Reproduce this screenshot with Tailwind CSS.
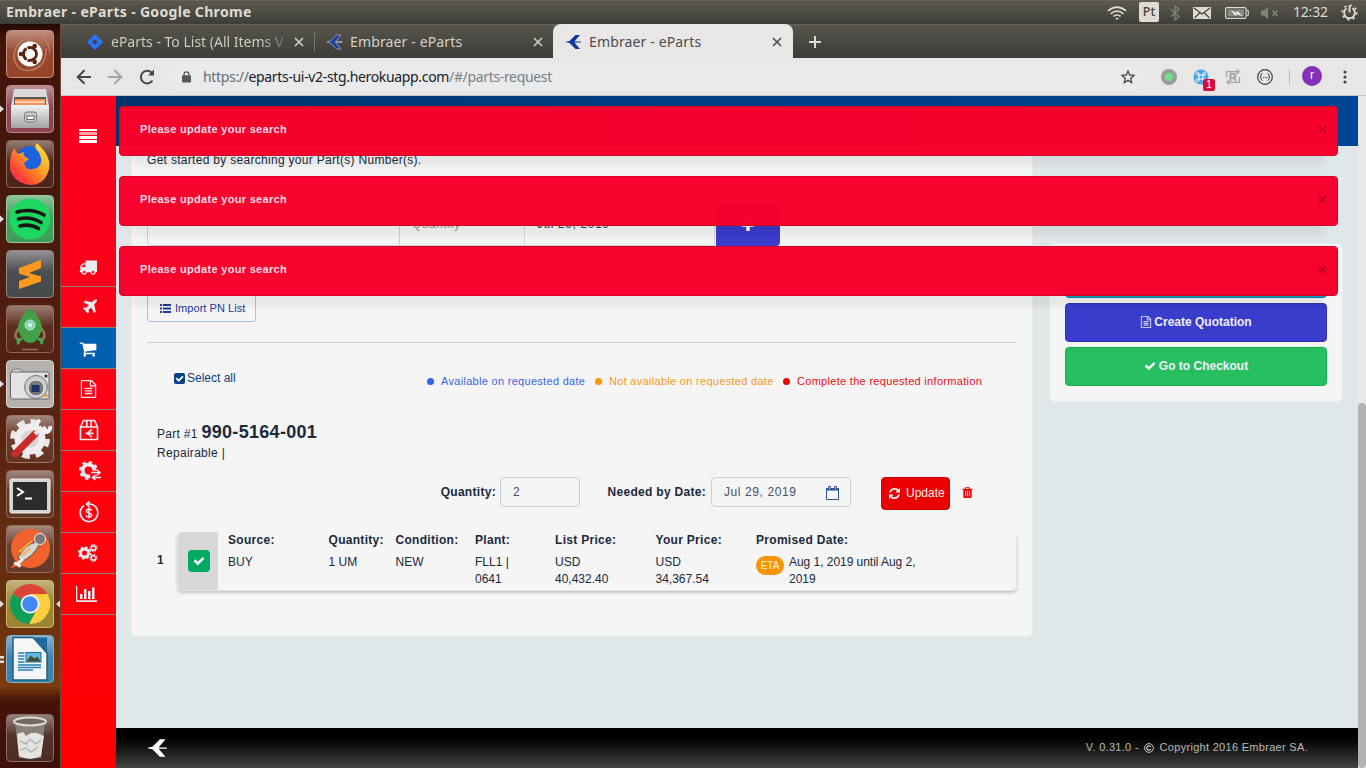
<!DOCTYPE html>
<html lang="en">
<head>
<meta charset="utf-8">
<title>Embraer - eParts</title>
<script src="https://cdn.jsdelivr.net/npm/@tailwindcss/browser@4"></script>
</head>
<body class="w-[1366px] h-[768px] overflow-hidden font-['Liberation_Sans',sans-serif] text-[12px] text-[#20293a]">
<svg width="0" height="0" class="absolute">
  <symbol id="check" viewBox="0 0 1792 1792"><path d="M1671 566q0 40-28 68l-724 724-136 136q-28 28-68 28t-68-28l-136-136-362-362q-28-28-28-68t28-68l136-136q28-28 68-28t68 28l294 295 656-657q28-28 68-28t68 28l136 136q28 28 28 68z"/></symbol>
  <symbol id="file" viewBox="0 0 1792 1792"><path d="M1596 380q28 28 48 76t20 88v1152q0 40-28 68t-68 28h-1344q-40 0-68-28t-28-68v-1600q0-40 28-68t68-28h896q40 0 88 20t76 48zm-444-244v376h376q-10-29-22-41l-313-313q-12-12-41-22zm384 1528v-1024h-416q-40 0-68-28t-28-68v-416h-768v1536h1280zm-1024-864q0-14 9-23t23-9h704q14 0 23 9t9 23v64q0 14-9 23t-23 9h-704q-14 0-23-9t-9-23v-64zm736 224q14 0 23 9t9 23v64q0 14-9 23t-23 9h-704q-14 0-23-9t-9-23v-64q0-14 9-23t23-9h704zm0 256q14 0 23 9t9 23v64q0 14-9 23t-23 9h-704q-14 0-23-9t-9-23v-64q0-14 9-23t23-9h704z"/></symbol>
  <symbol id="emb" viewBox="0 0 16 16"><path d="M0 7.700 3.500 7 9.500 1h4.500L8.500 7.500H15v1H8.500L14 15H9.500L3.500 9 0 8.300z"/></symbol>
  <symbol id="x" viewBox="0 0 10 10"><path d="M1 1l8 8M9 1L1 9" fill="none" stroke="currentColor" stroke-width="1.6"/></symbol>
  <linearGradient id="metal" x1="0" y1="0" x2="0" y2="1"><stop offset="0" stop-color="#f2f2f2"/><stop offset="1" stop-color="#a4a4a4"/></linearGradient>
  <linearGradient id="fox" x1="1" y1="0" x2="0" y2="1"><stop offset="0" stop-color="#fff44a"/><stop offset=".45" stop-color="#ff9a22"/><stop offset=".75" stop-color="#ff4236"/><stop offset="1" stop-color="#e4206a"/></linearGradient>
  <linearGradient id="glass" x1="0" y1="0" x2="0" y2="1"><stop offset="0" stop-color="#fff" stop-opacity=".4"/><stop offset=".45" stop-color="#fff" stop-opacity=".03"/><stop offset="1" stop-color="#fff" stop-opacity="0"/></linearGradient>
  <symbol id="gloss" viewBox="0 0 48 48"><rect x="1" y="1" width="46" height="46" rx="4" fill="url(#glass)"/></symbol>
</svg>

<div class="flex flex-col w-full h-full">
  <!-- system bar -->
  <header class="h-6 shrink-0 flex items-center bg-gradient-to-b from-[#5b594f] to-[#3e3d38] border-t border-[#66644f] text-[#dfdbd2] font-['Noto_Sans',sans-serif]">
    <div class="pl-[6px] -mt-[2px] w-[1107px] text-[14px] leading-[20px] font-bold tracking-[0.33px] whitespace-nowrap">Embraer - eParts - Google Chrome</div>
    <svg class="w-5 h-[14px]" viewBox="0 0 20 14" fill="none" stroke="#dfdbd2" stroke-width="1.6"><path d="M.8 5q9.200-7.800 18.400 0M3.600 7.800q6.400-5.400 12.800 0M6.400 10.400q3.600-2.800 7.200 0"/><path d="M8 12h4l-2 2z" fill="#dfdbd2" stroke="none"/></svg>
    <div class="ml-3 -mt-px w-5 h-5 rounded-[2px] bg-[#dfdbd2] text-[#3f3e3a] text-[12.5px] font-medium leading-[20px] text-center">Pt</div>
    <svg class="ml-[11px] w-[10px] h-4" viewBox="0 0 10 16" fill="none" stroke="#85837a" stroke-width="1.3"><path d="M1 4.500l8 7L5 15V1l4 3.500-8 7"/></svg>
    <svg class="ml-[13px] w-[18px] h-3" viewBox="0 0 18 12"><path d="M0 0h18v12H0z" fill="#dfdbd2"/><path d="M1 1l8 6 8-6M1.500 11L7 5.500M16.500 11L11 5.500" fill="none" stroke="#45443f" stroke-width="1.200"/></svg>
    <svg class="ml-[14px] w-6 h-3" viewBox="0 0 24 12" fill="none" stroke="#dfdbd2"><rect x=".6" y=".6" width="20.500" height="10.800" rx="1.500" stroke-width="1.200"/><rect x="2.500" y="2.500" width="16.500" height="7" fill="#8c8a82" stroke="none"/><path d="M22 3.500h1.300v5H22"/><path d="M5.500 3l6 3.200.5-2.200L17.500 9.300l-6-2.600-.5 2.300z" fill="#fff" stroke="none"/></svg>
    <svg class="ml-3 w-[18px] h-3" viewBox="0 0 18 12" fill="#85837a"><path d="M0 3.500h3L7 0v12L3 8.500H0z"/><path d="M11.500 3.500l5 5.500M16.500 3.500l-5 5.500" stroke="#85837a" stroke-width="1.500"/></svg>
    <div class="ml-[14px] -mt-px w-[48px] text-[14px] leading-[20px] tracking-[-0.2px]">12:32</div>
    <svg class="w-[17px] h-[17px]" viewBox="0 0 17 17" fill="none" stroke="#dfdbd2"><circle cx="8.500" cy="8.500" r="7.200" stroke-width="1.800" stroke-dasharray="2.200 3.450"/><path d="M5.600 4.200a5.400 5.400 0 1 0 5.800 0M8.500 1.500v7" stroke-width="1.900"/></svg>
  </header>

  <div class="flex flex-1 min-h-0">
    <!-- launcher -->
    <aside class="relative w-[61px] shrink-0 border-r border-[#6d4a3a] bg-[linear-gradient(to_bottom,#220a06_0,#411409_14px,#47190d_180px,#5a2413_420px,#6b310f_590px,#7a3b0d_662px,#461408_676px,#3c1008_100%)] pt-[6px] pl-[6px] flex flex-col gap-[7px]">
      <svg class="shrink-0 w-12 h-12" viewBox="0 0 48 48"><rect x=".5" y=".5" width="47" height="47" rx="4" fill="#95442a" stroke="#c58e76"/><use href="#gloss"/><path d="M8 30Q7 12 24 7q18-4 20 16M40 18q1 18-14 22Q10 43 8 26" fill="none" stroke="#b87c62" stroke-width="1.500"/><circle cx="24" cy="24" r="12.500" fill="#fff"/><circle cx="24" cy="24" r="6.500" fill="none" stroke="#5a2312" stroke-width="2.800" stroke-dasharray="12.600 1"/><circle cx="15" cy="24" r="2.300" fill="#5a2312"/><circle cx="28.700" cy="16" r="2.300" fill="#5a2312"/><circle cx="28.700" cy="32" r="2.300" fill="#5a2312"/></svg>
      <svg class="shrink-0 w-12 h-12" viewBox="0 0 48 48"><rect x=".5" y=".5" width="47" height="47" rx="4" fill="#8d4350" stroke="#c08a92"/><use href="#gloss"/><path d="M8 4h32l3 18H5z" fill="#d9d9d9"/><path d="M8 12h32v11H8z" fill="#5c5652"/><path d="M9 14h30v10H9z" fill="#f0945a"/><path d="M9 17h30" stroke="#fff" stroke-width="1"/><rect x="5" y="20" width="38" height="23" rx="1" fill="url(#metal)"/><rect x="18.500" y="27" width="12" height="10" rx="2.500" fill="#ccc" stroke="#777"/><rect x="21" y="31" width="7" height="3.500" fill="#fff" stroke="#666"/></svg>
      <svg class="shrink-0 w-12 h-12" viewBox="0 0 48 48"><rect x=".5" y=".5" width="47" height="47" rx="4" fill="#4c2418" stroke="#8a6a5e"/><use href="#gloss"/><circle cx="24" cy="20" r="14" fill="#1c62dc"/><path d="M8 8l4 6 6-2q-2 4 5 7l-5 4q2 8 9 6 7-1 8-7 1-7-5-13-2-3 1-6 4 4 8 9 6 9 4 17-4 16-19 16Q8 43 4 29q-1-12 4-21z" fill="url(#fox)"/></svg>
      <svg class="shrink-0 w-12 h-12" viewBox="0 0 48 48"><rect x=".5" y=".5" width="47" height="47" rx="4" fill="#3f9d5a" stroke="#9bc8a5"/><use href="#gloss"/><circle cx="24" cy="24" r="20.500" fill="#1ed760"/><path d="M11 17q15-4 27 3M12.500 24q12-3 22.500 3.500M14 31q10-2.500 18.500 2.500" fill="none" stroke="#191414" stroke-width="3.600" stroke-linecap="round"/></svg>
      <svg class="shrink-0 w-12 h-12" viewBox="0 0 48 48"><rect x=".5" y=".5" width="47" height="47" rx="4" fill="#46494a" stroke="#958b86"/><use href="#gloss"/><path d="M13 18l22-8v8l-12 5 12 3.500v5L13 39v-8l11-4-11-3.500z" fill="#ff9a1f"/></svg>
      <svg class="shrink-0 w-12 h-12" viewBox="0 0 48 48"><rect x=".5" y=".5" width="47" height="47" rx="4" fill="#572617" stroke="#8f6a5c"/><use href="#gloss"/><path d="M13 23q-7 9 0 12M35 23q7 9 0 12" fill="none" stroke="#8c7e58" stroke-width="2.500"/><path d="M24 3q12 10 12 21-4 14-12 14t-12-14Q12 13 24 3z" fill="#43a047"/><path d="M16 34q-6 1-3 5M32 34q6 1 3 5" fill="none" stroke="#3fae57" stroke-width="3"/><circle cx="24" cy="20" r="5" fill="#7dd6b6" stroke="#c7e8d4"/><circle cx="24" cy="20" r="2" fill="#eafff8"/><path d="M16 44.500h16" stroke="#8a7165" stroke-width="1.500"/></svg>
      <svg class="shrink-0 w-12 h-12" viewBox="0 0 48 48"><rect x=".5" y=".5" width="47" height="47" rx="4" fill="#b5b1ae" stroke="#d8d5d3"/><ellipse cx="11" cy="12" rx="5.500" ry="3" fill="#ddd" stroke="#777"/><rect x="4.500" y="12" width="38.500" height="27" rx="2" fill="#e3e3e3" stroke="#666"/><circle cx="30" cy="27" r="11.500" fill="#ccc" stroke="#777"/><circle cx="30" cy="28" r="8" fill="#777" stroke="#eee"/><rect x="25.500" y="25" width="8" height="7" fill="#173568"/><circle cx="40" cy="16" r="1.500" fill="#222"/><rect x="38.500" y="34" width="3" height="3" fill="#e69b2e"/></svg>
      <svg class="shrink-0 w-12 h-12" viewBox="0 0 48 48"><rect x=".5" y=".5" width="47" height="47" rx="4" fill="#643423" stroke="#9d7766"/><use href="#gloss"/><circle cx="24" cy="24" r="17.500" fill="none" stroke="#e8e8e8" stroke-width="5" stroke-dasharray="7.750 6"/><circle cx="24" cy="24" r="12" fill="#d5d5d5" stroke="#eee" stroke-width="7"/><path d="M9 39L29 19" stroke="#c92a2a" stroke-width="7" stroke-linecap="round"/><path d="M29 19l7-7" stroke="#e6e6e6" stroke-width="4.500"/><path d="M34 5q-5 4-2 8t9 4q4-2 3-6" fill="none" stroke="#f0f0f0" stroke-width="4"/></svg>
      <svg class="shrink-0 w-12 h-12" viewBox="0 0 48 48"><rect x=".5" y=".5" width="47" height="47" rx="4" fill="#5f3524" stroke="#93705f"/><use href="#gloss"/><rect x="4" y="9" width="40" height="34" rx="1.500" fill="#d4d4d2" stroke="#f0f0f0"/><rect x="7" y="12" width="34" height="28" fill="#2b2d2c"/><path d="M11 18l6 4-6 4" fill="none" stroke="#fff" stroke-width="2"/><path d="M19 28.500h7" stroke="#fff" stroke-width="2"/></svg>
      <svg class="shrink-0 w-12 h-12" viewBox="0 0 48 48"><rect x=".5" y=".5" width="47" height="47" rx="4" fill="#663a28" stroke="#96705e"/><use href="#gloss"/><circle cx="24.500" cy="23.500" r="19.500" fill="#f1622d"/><path d="M4 43l10-9 3 6z" fill="#f1622d"/><path d="M12 32q8-13 18-15l3 3q-5 11-18 17z" fill="#d6d6cf" stroke="#4d4d4d"/><path d="M13 27L26 16M15 31l9-7" stroke="#ffac42" stroke-width="2"/><circle cx="34" cy="14" r="5.500" fill="#777" stroke="#eee"/><path d="M17 34l-6 5-3-1M12 38l2 4" fill="none" stroke="#eee" stroke-width="3"/></svg>
      <svg class="shrink-0 w-12 h-12" viewBox="0 0 48 48"><rect x=".5" y=".5" width="47" height="47" rx="4" fill="#9c8430" stroke="#cbb96e"/><use href="#gloss"/><path d="M24 24L6.700 14a20 20 0 0 1 34.600 0z" fill="#db4437"/><path d="M24 24V14h17.500a20 20 0 0 1-18 30z" fill="#ffcd40"/><path d="M24 24l6 7-7 13A20 20 0 0 1 6.700 14z" fill="#109d58"/><circle cx="24" cy="24" r="9.500" fill="#f3f3f3"/><circle cx="24" cy="24" r="7.700" fill="#4587f4"/></svg>
      <svg class="shrink-0 w-12 h-12" viewBox="0 0 48 48"><rect x=".5" y=".5" width="47" height="47" rx="4" fill="#3a82ad" stroke="#7db0cc"/><use href="#gloss"/><path d="M7 2.500h20L41 18v27H7z" fill="#f6f6f6" stroke="#1e5f85" stroke-width="1.500"/><path d="M27 2.500h14V18z" fill="#1c6b9c"/><rect x="20" y="17.500" width="15" height="9.500" fill="#66b8e0" stroke="#136fa8"/><path d="M20.500 26.500l4-6 4 3 3-2 3 5z" fill="#46502f"/><path d="M12 18h6.500M12 21h6.500M12 24h6.500M12 27h6.500M12 30h23M12 32.500h23M12 35h15" stroke="#2481b8" stroke-width="1.400"/></svg>
      <svg class="shrink-0 w-12 h-12 mt-6" viewBox="0 0 48 48"><rect x=".5" y=".5" width="47" height="47" rx="4" fill="#4d2c24" stroke="#867069"/><use href="#gloss"/><path d="M9 8h30l-4 36H13z" fill="#8b7f7a"/><ellipse cx="24" cy="7.500" rx="16" ry="4" fill="#776761" stroke="#ddd" stroke-width="2"/><path d="M11 20l6-2 3 4 5-3 6 0 7 3-3 20q-11 6-22 0z" fill="#e4e4e0"/><path d="M14 27l6 3 4-5 6 5 5-4M14 36l6-2 5 4 7-5" fill="none" stroke="#b5b5b0" stroke-width="1.500"/></svg>
      <svg class="absolute left-0 top-0 w-[61px] h-[744px]" viewBox="0 0 61 744" fill="#ddd"><path d="M0 81.500l4 3.500-4 3.500zM0 191.500l4 3.500-4 3.500zM0 356.500l4 3.500-4 3.500zM0 576.500l4 3.500-4 3.500zM60 576.500l-4 3.500 4 3.500zM0 632h4v2.500H0zM0 636.500h4v2.500H0z"/></svg>
    </aside>

    <div class="flex-1 min-w-0 flex flex-col">
      <!-- tab strip -->
      <div class="h-[34px] shrink-0 flex items-center bg-gradient-to-b from-[#57554d] to-[#3d3c37] border-t border-[#66645b] font-['Noto_Sans',sans-serif] text-[14px] leading-5 text-[#d3d0c6] tracking-[0.14px] whitespace-nowrap">
        <div class="w-[254px] flex items-center pl-[26px]">
          <svg class="w-4 h-4" viewBox="0 0 16 16"><path d="M8 0l8 8-8 8-8-8z" fill="#2477fa"/><path d="M8 5.200L10.800 8 8 10.800 5.200 8z" fill="#45443f"/></svg>
          <div class="ml-2 w-[178px] tracking-[0px] bg-gradient-to-r from-[#d3d0c6] from-85% to-[#d3d0c6]/10 bg-clip-text text-transparent">eParts - To List (All Items V</div>
          <svg class="ml-[5px] w-[10px] h-[10px]"><use href="#x"/></svg>
        </div>
        <div class="w-[238px] h-full flex items-center">
          <div class="w-px h-5 -ml-px mr-px bg-[#77756c]"></div>
          <svg class="ml-[11px] w-4 h-4" fill="#1b3fa0" stroke="#b7bccb" stroke-width=".7"><use href="#emb"/></svg>
          <div class="ml-[7px] w-[183px]">Embraer - eParts</div>
          <svg class="w-[10px] h-[10px]"><use href="#x"/></svg>
        </div>
        <div class="w-[240px] self-stretch -mt-px pt-px rounded-t-lg bg-[#e9e7e5] text-[#4b4c4e] flex items-center">
          <svg class="ml-[13px] w-4 h-4" fill="#1238a0"><use href="#emb"/></svg>
          <div class="ml-[7px] w-[183px]">Embraer - eParts</div>
          <svg class="w-[10px] h-[10px]"><use href="#x"/></svg>
        </div>
        <svg class="ml-4 w-3 h-3" viewBox="0 0 12 12"><path d="M6 0v12M0 6h12" stroke="#dedbd2" stroke-width="2"/></svg>
      </div>
      <!-- toolbar -->
      <div class="h-[38px] shrink-0 flex items-center bg-[#e9e7e5] border-b border-[#c6c4c1]">
        <svg class="ml-[15px] w-[15px] h-4" viewBox="0 0 15 16" fill="none" stroke="#45464a" stroke-width="2"><path d="M15 8H2M8.500 1.200L1.700 8l6.800 6.800"/></svg>
        <svg class="ml-[17px] w-[15px] h-4" viewBox="0 0 15 16" fill="none" stroke="#a5a5a5" stroke-width="2"><path d="M0 8h13M6.500 1.200L13.300 8l-6.800 6.800"/></svg>
        <svg class="ml-[16px] w-4 h-4" viewBox="0 0 16 16" fill="none" stroke="#45464a" stroke-width="2"><path d="M13.500 11.500A6.300 6.300 0 1 1 12.500 3.500L14 5.200"/><path d="M15 .5v6H9z" fill="#45464a" stroke="none"/></svg>
        <div class="ml-[13px] h-7 w-[976px] rounded-full bg-[#e8eaec] flex items-center">
          <svg class="ml-[14px] w-[9px] h-[12px]" viewBox="0 0 10 13"><rect y="4.500" width="10" height="8" rx="1" fill="#55575b"/><path d="M2.300 5V3.500a2.700 2.700 0 0 1 5.400 0V5" fill="none" stroke="#55575b" stroke-width="1.400"/></svg>
          <div class="ml-3 w-[918px] font-['Noto_Sans',sans-serif] text-[14px] leading-5 tracking-[-0.34px] text-[#7c8085]"><span class="text-[#6a6d72]">https://</span><span class="text-[#202124]">eparts-ui-v2-stg.herokuapp.com</span>/#/parts-request</div>
          <svg class="w-[14px] h-[14px]" viewBox="0 0 14 14" fill="none" stroke="#4d5054" stroke-width="1.400"><path d="M7 1l1.700 4 4.300.4-3.200 2.900.9 4.300L7 10.300l-3.700 2.300.9-4.300L1 5.400 5.300 5z"/></svg>
        </div>
        <svg class="ml-[17px] w-4 h-4" viewBox="0 0 16 16"><circle cx="8" cy="8" r="6" fill="#6fe08c" stroke="#9c9c9c" stroke-width="4"/></svg>
        <div class="relative ml-4 w-4 h-4">
          <svg class="w-4 h-4" viewBox="0 0 16 16"><circle cx="8" cy="8" r="7.500" fill="#4ba3e8"/><path d="M6 6h4v4H6zM6 6H4.700A1.300 1.300 0 1 1 6 4.700zM10 6V4.700A1.300 1.300 0 1 1 11.300 6zM6 10v1.300A1.300 1.300 0 1 1 4.700 10zM10 10h1.300A1.300 1.300 0 1 1 10 11.300z" fill="none" stroke="#fff"/></svg>
          <div class="absolute left-[10px] top-[10px] w-3 h-3 rounded-[2px] bg-[#dc0a3c] text-white text-[10px] leading-3 text-center">1</div>
        </div>
        <svg class="ml-4 w-4 h-4" viewBox="0 0 16 16" fill="none" stroke="#a6a6a6" stroke-width="1.300"><path d="M1.500 8V2.700H14M11.500.5L14 2.700l-2.500 2.200M14.500 8v5.300H2M4.500 11L2 13.300l2.500 2.200"/><path d="M5.500 12V4.800h3a1.900 1.900 0 0 1 0 3.800h-3m3 0L11 12" stroke-width="1.900"/></svg>
        <svg class="ml-4 w-4 h-4" viewBox="0 0 16 16" fill="none" stroke="#3c3c3c"><circle cx="8" cy="8" r="7.300" stroke-width="1.200"/><path d="M5.500 4.500q-1.500 0-1.500 2T3 8q1 0 1 1.500t1.500 2M10.500 4.500q1.500 0 1.500 2T13 8q-1 0-1 1.500t-1.500 2"/><path d="M6 8.500h4.500" stroke-dasharray="1 .7"/></svg>
        <div class="ml-4 w-px h-4 bg-[#bfbfbf]"></div>
        <div class="ml-[12px] w-5 h-5 -mt-[2px] rounded-full bg-[#8430b8] text-white text-[12px] leading-[18px] text-center">r</div>
        <svg class="ml-[21px] w-1 h-4" viewBox="0 0 4 16" fill="#454649"><circle cx="2" cy="3" r="1.600"/><circle cx="2" cy="8" r="1.600"/><circle cx="2" cy="13" r="1.600"/></svg>
      </div>

      <div class="flex flex-1 min-h-0">
        <!-- site navigation -->
        <nav class="w-[55px] shrink-0 bg-gradient-to-b from-[#f90020] via-[#fd0010] to-[#ff0000] text-[#e9e9ee] flex flex-col">
          <div class="h-[149px] pt-[33px] pl-[18px]"><svg class="w-[18px] h-[14px]" viewBox="0 0 18 14" fill="#fff"><path d="M0 0h18v2H0zM0 7h18v3H0zM0 11h18v3H0z"/><path d="M0 3h18v3H0z" fill="#ffa0ab"/></svg></div>
          <div class="h-[42px] border-b border-[#8a8080] flex items-center justify-center pr-[2px]"><svg class="w-[18px] h-[18px] mt-[2px]" viewBox="0 0 1792 1792" fill="currentColor"><path d="M640 1408q0-52-38-90t-90-38-90 38-38 90 38 90 90 38 90-38 38-90zm-384-512h384v-256h-158q-13 0-22 9l-195 195q-9 9-9 22v30zm1280 512q0-52-38-90t-90-38-90 38-38 90 38 90 90 38 90-38 38-90zm256-1088v1024q0 15-4 26.500t-13.500 18.500-16.500 11.500-23.500 6-22.500 2-25.500 0-22.500-.5q0 106-75 181t-181 75-181-75-75-181h-384q0 106-75 181t-181 75-181-75-75-181h-64q-3 0-22.500.5t-25.500 0-22.500-2-23.500-6-16.500-11.500-13.500-18.500-4-26.500q0-26 19-45t45-19v-320q0-8-.5-35t0-38 2.500-34.500 6.500-37 14-30.500 22.500-30l198-198q19-19 50.500-32t58.500-13h160v-192q0-26 19-45t45-19h1024q26 0 45 19t19 45z"/></svg></div>
          <div class="h-[41px] border-b border-[#8a8080] flex items-center justify-center"><svg class="w-[18px] h-[18px] ml-[2px]" viewBox="0 0 1792 1792" fill="currentColor"><path d="M1568 160q44 52 12 148t-108 172l-161 161 160 696q5 19-12 33l-128 96q-7 6-19 6-4 0-7-1-15-3-21-16l-279-508-259 259 53 194q5 17-8 31l-96 96q-9 9-23 9h-2q-15-2-24-13l-189-252-252-189q-11-7-13-23-1-13 9-25l96-97q9-9 23-9 6 0 8 1l194 53 259-259-508-279q-14-8-17-24-2-16 9-27l128-128q14-13 30-8l665 159 160-160q76-76 172-108t148 12z"/></svg></div>
          <div class="h-[41px] border-b border-[#8a8080] bg-[#0060ae] flex items-center justify-center pr-[2px]"><svg class="w-[18px] h-[18px] mt-[2px]" viewBox="0 0 1792 1792" fill="#fff"><path d="M704 1536q0 52-38 90t-90 38-90-38-38-90 38-90 90-38 90 38 38 90zm896 0q0 52-38 90t-90 38-90-38-38-90 38-90 90-38 90 38 38 90zm128-1088v512q0 24-16.500 42.500t-40.500 21.500l-1044 122q13 60 13 70 0 16-24 64h920q26 0 45 19t19 45-19 45-45 19h-1024q-26 0-45-19t-19-45q0-11 8-31.500t16-36 21.500-40 15.500-29.500l-177-823h-204q-26 0-45-19t-19-45 19-45 45-19h256q16 0 28.500 6.500t19.500 15.500 13 24.500 8 26 5.500 29.500 4.500 26h1201q26 0 45 19t19 45z"/></svg></div>
          <div class="h-[41px] border-b border-[#8a8080] flex items-center justify-center"><svg class="w-[19px] h-[18px]" fill="currentColor"><use href="#file"/></svg></div>
          <div class="h-[41px] border-b border-[#8a8080] flex items-center justify-center"><svg class="w-5 h-[22px]" viewBox="0 0 20 22" fill="none" stroke="currentColor" stroke-width="1.700"><path d="M1.500 8L4.500 1.500h11l3 6.500v12.500h-17zM1.500 8h17M7.800 8V2M12.200 8V2"/><path d="M12.800 10.500L8.500 14.300l4.300 3.800M6.500 14.300h8" stroke-width="1.700"/></svg></div>
          <div class="h-[41px] border-b border-[#8a8080] flex items-center justify-center pl-[2px]"><svg class="w-[22px] h-[22px]" viewBox="0 0 22 22" fill="none" stroke="currentColor"><circle cx="9.500" cy="10.500" r="5.800" stroke-width="3.800"/><circle cx="9.500" cy="10.500" r="8.300" stroke-width="2.400" stroke-dasharray="3.400 3.120"/><path d="M10.500 10.500h11.500v11H12z" fill="#fd0010" stroke="none"/><path d="M12 12.500h8M17.500 9.500l3.500 3-3.500 3M22 17.500h-8M16.500 15L13.500 17.500l3 2.500" stroke-width="1.600"/></svg></div>
          <div class="h-[41px] border-b border-[#8a8080] flex items-center justify-center"><svg class="w-5 h-[22px]" viewBox="0 0 20 22" fill="none" stroke="currentColor" stroke-width="1.700"><path d="M5 4.500a8.800 8.800 0 1 0 6-1.500H7.500M10.500.5L7.500 3l3 3"/><path d="M12.800 9.500q-.6-1.500-2.800-1.500t-2.600 1.800q0 1.700 2.600 2.200t2.800 2.200q-.3 1.800-2.800 1.800t-2.900-1.700M10 6.500v11" stroke-width="1.500"/></svg></div>
          <div class="h-[41px] border-b border-[#8a8080] flex items-center justify-center pr-[2px]"><svg class="w-5 h-[18px]" viewBox="0 0 20 18" fill="none" stroke="currentColor"><circle cx="6.500" cy="9" r="4" stroke-width="3"/><circle cx="6.500" cy="9" r="5.800" stroke-width="1.800" stroke-dasharray="2.280 2.280"/><circle cx="15.500" cy="4" r="2.200" stroke-width="1.500"/><circle cx="15.500" cy="4" r="3.400" stroke-width="1.300" stroke-dasharray="1.330 1.330"/><circle cx="15.500" cy="14" r="2.200" stroke-width="1.500"/><circle cx="15.500" cy="14" r="3.400" stroke-width="1.300" stroke-dasharray="1.330 1.330"/></svg></div>
          <div class="h-[41px] border-b border-[#8a8080] flex items-center justify-center"><svg class="w-[21px] h-4 mr-1" viewBox="0 0 21 16" fill="currentColor"><path d="M0 0h1.300v14.300H21V16H0zM4 8h2.500v5H4zM8 3h2.500v10H8zM12 5h2.500v8H12zM16 1.500h2.500V13H16z"/></svg></div>
        </nav>

        <!-- page -->
        <div class="relative w-[1242px] flex flex-col bg-[#e0e7e9]">
          <div class="h-[50px] shrink-0 bg-gradient-to-r from-[#00346a] via-[#003d80] via-40% to-[#004494]"></div>
          <div class="flex-1 min-h-0 flex items-start pl-[15px] gap-4">
            <main class="w-[902px] h-[491px] shrink-0 bg-[#f5f5f5] border border-t-0 border-[#e8ecee] rounded-b-md px-[15px] flex flex-col">
              <p class="mt-[5px] h-[18px] leading-[18px] tracking-[0.3px] whitespace-nowrap">Get started by searching your Part(s) Number(s).</p>
              <div class="mt-[35px] h-[42px] flex text-[#394663]">
                <div class="w-[253px] border border-[#c6cde0] rounded-l"></div>
                <div class="w-[125px] border-b border-t border-r border-[#d4d4d8] pl-3 leading-[38px] tracking-[0.5px] text-[#999]">Quantity</div>
                <div class="w-[190px] border-b border-t border-r border-[#d4d4d8] pl-3 leading-[38px] tracking-[0.6px]">Jul 29, 2019</div>
                <div class="ml-[1px] w-16 rounded-r bg-[#3a3ccc] flex items-center justify-center"><svg class="w-3 h-3" viewBox="0 0 12 12"><path d="M6 0v12M0 6h12" stroke="#fff" stroke-width="3.400"/></svg></div>
              </div>
              <button class="mt-[48px] w-[109px] h-7 border border-[#a9bce8] rounded-[3px] text-[#203a9c] text-[11px] tracking-[0.05px] flex items-center whitespace-nowrap">
                <svg class="ml-[12px] mr-[4px] w-[11px] h-[9px]" viewBox="0 0 11 9" fill="currentColor"><path d="M0 0h2v2H0zM0 3.500h2v2H0zM0 7h2v2H0zM3 0h8v2H3zM3 3.500h8v2H3zM3 7h8v2H3z"/></svg>Import PN List</button>
              <div class="mt-[20px] h-px bg-[#c9cacc]"></div>
              <div class="h-[78px] flex pt-[27px]">
                <div class="w-[280px] pl-[27px] h-4 flex items-center text-[#0b3f80] whitespace-nowrap"><svg class="w-[11px] h-[11px] mr-[2px]" viewBox="0 0 11 11"><rect width="11" height="11" rx="2" fill="#064287"/><path d="M2.300 5.200l2.400 2.500 4.200-4.400" fill="none" stroke="#fff" stroke-width="1.800"/></svg>Select all</div>
                <div class="flex items-center h-[22px] text-[11px] tracking-[0.3px] whitespace-nowrap">
                  <i class="w-[7px] h-[7px] rounded-full bg-[#2f62ee] mr-[7px]"></i><span class="w-[154px] text-[#3a63e6]">Available on requested date</span>
                  <i class="w-[7px] h-[7px] rounded-full bg-[#f79400] mr-[7px]"></i><span class="w-[174px] text-[#f39a20]">Not available on requested date</span>
                  <i class="w-[7px] h-[7px] rounded-full bg-[#ee0000] mr-[7px]"></i><span class="text-[#e31212]">Complete the requested information</span>
                </div>
              </div>
              <div class="pl-[10px] h-[24px] leading-[22px] tracking-[0.3px] whitespace-nowrap">Part #1 <b class="text-[18px]">990-5164-001</b></div>
              <div class="pl-[10px] h-[32px] leading-[16px] tracking-[0.3px]">Repairable |</div>
              <div class="h-[33px] flex items-start whitespace-nowrap">
                <b class="w-[353px] text-right pr-1 leading-[30px] tracking-[0.3px]">Quantity:</b>
                <div class="w-20 h-[30px] border border-[#c6cde0] rounded pl-3 leading-[28px] text-[#46526b]">2</div>
                <b class="w-[131px] text-right pr-[5px] leading-[30px] tracking-[0.3px]">Needed by Date:</b>
                <div class="w-[140px] h-[30px] border border-[#c6cde0] rounded pl-3 pr-[11px] leading-[28px] tracking-[0.6px] text-[#46526b] flex items-center justify-between">Jul 29, 2019
                  <svg class="w-[13px] h-[14px] mt-[2px]" viewBox="0 0 13 14" fill="none" stroke="#2d5796"><path d="M.5 3h12v10.500H.5z"/><path d="M0 2h13v2.500H0z" fill="#2d5796" stroke="none"/><path d="M3.500 0v3.500M9.500 0v3.500" stroke-width="2.600"/><path d="M3.500 1v2M9.500 1v2" stroke="#f5f5f5" stroke-width=".8"/></svg></div>
                <button class="ml-[30px] w-[69px] h-[33px] rounded bg-[#ea0000] border border-[#d40000] text-[#fff0f0] flex items-center pb-px"><svg class="ml-[6px] mr-[5px] w-[13px] h-[13px]" viewBox="0 0 1792 1792" fill="currentColor"><path d="M1639 1056q0 5-1 7-64 268-268 434.500t-478 166.500q-146 0-282.500-55t-243.500-157l-129 129q-19 19-45 19t-45-19-19-45v-448q0-26 19-45t45-19h448q26 0 45 19t19 45-19 45l-137 137q71 66 161 102t187 36q134 0 250-65t186-179q11-17 53-117 8-23 30-23h192q13 0 22.500 9.500t9.500 22.500zm25-800v448q0 26-19 45t-45 19h-448q-26 0-45-19t-19-45 19-45l138-138q-148-137-349-137-134 0-250 65t-186 179q-11 17-53 117-8 23-30 23h-199q-13 0-22.500-9.500t-9.500-22.500v-7q65-268 270-434.500t480-166.500q146 0 284 55.500t245 156.500l130-129q19-19 45-19t45 19 19 45z"/></svg>Update</button>
                <svg class="ml-[11px] mt-[9px] w-[13px] h-[13px]" viewBox="0 0 1792 1792" fill="#ee0000"><path d="M704 1376v-704q0-14-9-23t-23-9h-64q-14 0-23 9t-9 23v704q0 14 9 23t23 9h64q14 0 23-9t9-23zm256 0v-704q0-14-9-23t-23-9h-64q-14 0-23 9t-9 23v704q0 14 9 23t23 9h64q14 0 23-9t9-23zm256 0v-704q0-14-9-23t-23-9h-64q-14 0-23 9t-9 23v704q0 14 9 23t23 9h64q14 0 23-9t9-23zm-544-992h448l-48-117q-7-9-17-11h-317q-10 2-17 11zm928 32v64q0 14-9 23t-23 9h-96v948q0 83-47 143.500t-113 60.500h-832q-66 0-113-58.500t-47-141.500v-952h-96q-14 0-23-9t-9-23v-64q0-14 9-23t23-9h309l70-167q15-37 54-63t79-26h320q40 0 79 26t54 63l70 167h309q14 0 23 9t9 23z"/></svg>
              </div>
              <div class="mt-[22px] h-[59px] flex pl-[10px] shrink-0">
                <b class="w-5 leading-[56px]">1</b>
                <div class="w-[840px] rounded-[5px] border border-t-0 border-[#e2e7eb] shadow-[0_2px_3px_rgba(0,0,0,0.2)] flex overflow-hidden whitespace-nowrap leading-[17px]">
                  <div class="w-10 bg-[#d8d8d8] flex items-center justify-center pl-[2px]"><div class="w-[22px] h-[22px] rounded-[4px] bg-[#00aa63] flex items-center justify-center"><svg class="w-3 h-3" fill="#fff"><use href="#check"/></svg></div></div>
                  <div class="pl-[10px] w-[110.500px]"><b class="block h-[22px] tracking-[0.3px]">Source:</b>BUY</div>
                  <div class="w-[67px]"><b class="block h-[22px] tracking-[0.3px]">Quantity:</b>1 UM</div>
                  <div class="w-[79.500px]"><b class="block h-[22px] tracking-[0.3px]">Condition:</b>NEW</div>
                  <div class="w-20"><b class="block h-[22px] tracking-[0.3px]">Plant:</b>FLL1 |<br>0641</div>
                  <div class="w-[100.500px]"><b class="block h-[22px] tracking-[0.3px]">List Price:</b>USD<br>40,432.40</div>
                  <div class="w-[100.500px]"><b class="block h-[22px] tracking-[0.3px]">Your Price:</b>USD<br>34,367.54</div>
                  <div><b class="block h-[22px] tracking-[0.3px]">Promised Date:</b>
                    <div class="flex"><span class="mt-[2px] mr-[5px] w-7 h-[19px] rounded-full bg-[#f79400] text-[#fff3dd] text-[10px] leading-[19px] text-center">ETA</span><span class="tracking-[-0.04px]">Aug 1, 2019 until Aug 2,<br>2019</span></div></div>
                </div>
              </div>
            </main>
            <section class="mt-[97px] w-[294px] h-[159px] bg-[#f5f5f5] border border-[#e8ecee] rounded-md px-[15px] pt-[15px] flex flex-col gap-[5px] text-[12px] font-bold text-[#eef0fa]">
              <div class="h-[39px] rounded bg-[#0fa5c8] border border-[#0b7f9b] flex items-center justify-center">Save Draft</div>
              <div class="h-[39px] rounded bg-[#3a3ccc] border border-[#3033ba] flex items-center justify-center pb-[2px]"><svg class="w-3 h-3 mr-[2px]" fill="currentColor"><use href="#file"/></svg>Create Quotation</div>
              <div class="h-[39px] rounded bg-[#28bf60] border border-[#12b14d] flex items-center justify-center pb-[2px]"><svg class="w-3 h-3 mr-[3px]" fill="currentColor"><use href="#check"/></svg>Go to Checkout</div>
            </section>
          </div>
          <footer class="h-10 shrink-0 bg-gradient-to-b from-black to-[#454545] flex items-center justify-between pl-8 pr-[50px] pb-px text-[11px] tracking-[0.3px] text-[#b9b9b9]">
            <svg class="w-5 h-5" fill="#fff"><use href="#emb"/></svg>
            <div class="flex items-center whitespace-pre">V. 0.31.0 - <svg class="w-[10px] h-[10px] mx-[2px]" viewBox="0 0 10 10" fill="none" stroke="#c4c4c4"><circle cx="5" cy="5" r="4.400"/><path d="M6.900 3.800a2.200 2.200 0 1 0 0 2.400" stroke-width="1.300"/></svg> Copyright 2016 Embraer SA.</div>
          </footer>

          <!-- notifications -->
          <div class="absolute left-[3px] top-[10px] w-[1219px] flex flex-col gap-5 text-[11px] font-bold tracking-[0.3px] text-[#ffdfe3]">
            <div class="h-[50px] rounded border border-[#cf0426] bg-[#f8002a]/99 shadow-[0_24px_7px_-14px_rgba(0,0,0,0.06)] flex items-center justify-between pl-5 pr-[10px] pb-1"><span>Please update your search</span><svg class="w-[9px] h-[9px] mt-[1px] text-[#b5001e]"><use href="#x"/></svg></div>
            <div class="h-[50px] rounded border border-[#cf0426] bg-[#f8002a]/99 shadow-[0_24px_7px_-14px_rgba(0,0,0,0.06)] flex items-center justify-between pl-5 pr-[10px] pb-1"><span>Please update your search</span><svg class="w-[9px] h-[9px] mt-[1px] text-[#b5001e]"><use href="#x"/></svg></div>
            <div class="h-[50px] rounded border border-[#cf0426] bg-[#f8002a]/99 shadow-[0_24px_7px_-14px_rgba(0,0,0,0.06)] flex items-center justify-between pl-5 pr-[10px] pb-1"><span>Please update your search</span><svg class="w-[9px] h-[9px] mt-[1px] text-[#b5001e]"><use href="#x"/></svg></div>
          </div>
        </div>
        <!-- scrollbar -->
        <div class="w-2 bg-[#e9e9e9] flex flex-col justify-end"><div class="h-[365px] rounded-full bg-[#b2b2b2]"></div></div>
      </div>
    </div>
  </div>
</div>
</body>
</html>
